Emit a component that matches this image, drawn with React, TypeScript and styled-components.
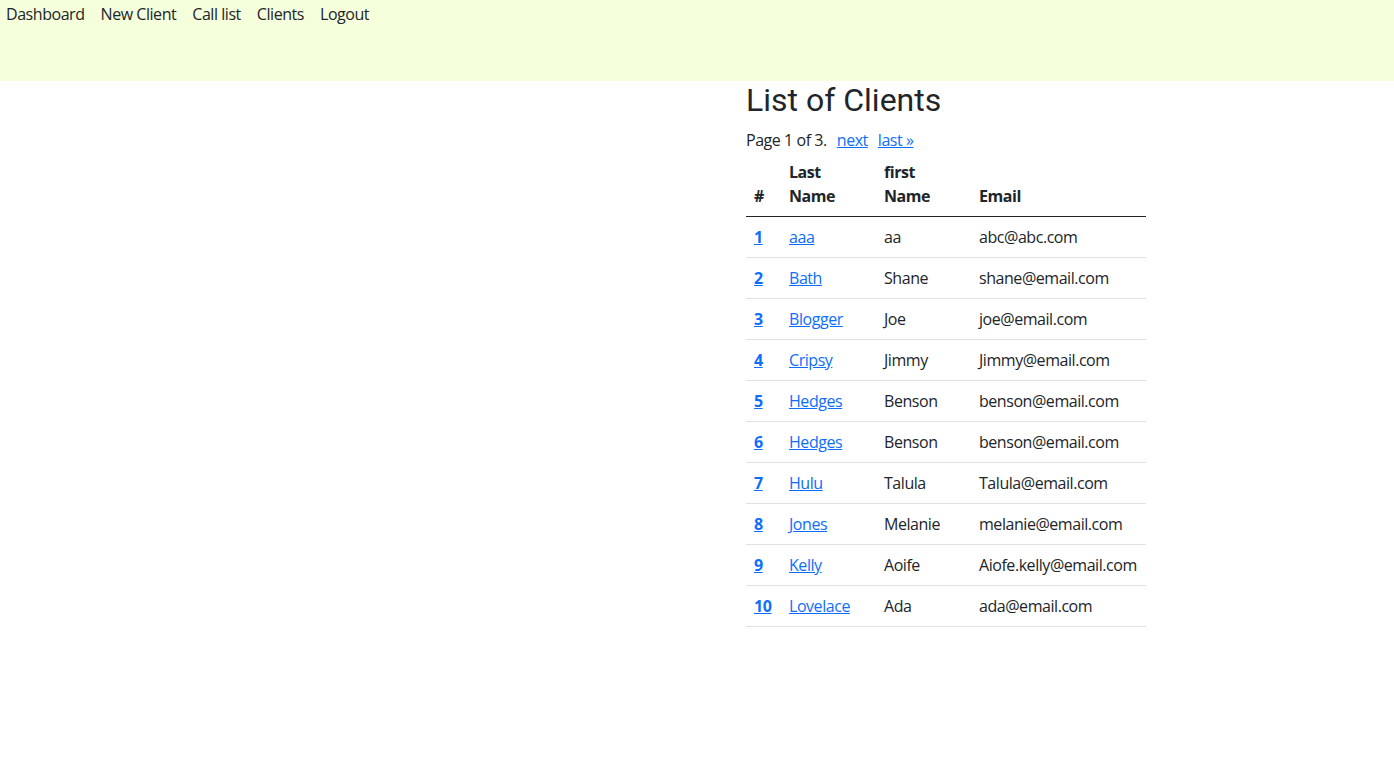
import React from "react";
import styled, { createGlobalStyle } from "styled-components";

const Global = createGlobalStyle`
  html, body { margin: 0; padding: 0; }
  body {
    font-family: "Open Sans", "Noto Sans", sans-serif;
    font-size: 16px;
    line-height: 1.5;
    letter-spacing: -0.45px;
    color: #212529;
    background: #fff;
  }
  * { box-sizing: border-box; }
`;

const NavBar = styled.nav`
  height: 81px;
  background: #f5ffdc;
  display: flex;
  align-items: flex-start;
  gap: 16px;
  padding: 2px 6px;
`;

const NavLink = styled.a`
  color: #212529;
  text-decoration: none;
  font-size: 16px;
  line-height: 24px;
  cursor: pointer;
`;

const Layout = styled.div`
  display: grid;
  grid-template-columns: 746px 400px 1fr;
`;

const Main = styled.main`
  grid-column: 2;
`;

const Title = styled.h2`
  font-family: Roboto, sans-serif;
  font-weight: 400;
  font-size: 32px;
  letter-spacing: 0;
  line-height: 40px;
  margin: -1px 0 8px;
`;

const Pager = styled.p`
  margin: 0;
  line-height: 24px;
  display: flex;
  gap: 10px;
`;

const Link = styled.a<{ $bold?: boolean }>`
  color: #0d6efd;
  text-decoration: underline;
  font-weight: ${(p) => (p.$bold ? 700 : 400)};
  cursor: pointer;
`;

const Table = styled.table`
  width: 400px;
  border-collapse: collapse;
  table-layout: fixed;
`;

const Th = styled.th<{ $w: number }>`
  width: ${(p) => p.$w}px;
  text-align: left;
  vertical-align: bottom;
  font-weight: 700;
  padding: 8px;
  line-height: 24px;
  border-bottom: 1px solid #212529;
`;

const Td = styled.td`
  padding: 8px;
  line-height: 24px;
  border-bottom: 1px solid #dee2e6;
  white-space: nowrap;
`;

const clients = [
  ["aaa", "aa", "abc@abc.com"],
  ["Bath", "Shane", "shane@email.com"],
  ["Blogger", "Joe", "joe@email.com"],
  ["Cripsy", "Jimmy", "Jimmy@email.com"],
  ["Hedges", "Benson", "benson@email.com"],
  ["Hedges", "Benson", "benson@email.com"],
  ["Hulu", "Talula", "Talula@email.com"],
  ["Jones", "Melanie", "melanie@email.com"],
  ["Kelly", "Aoife", "Aiofe.kelly@email.com"],
  ["Lovelace", "Ada", "ada@email.com"],
];

export default function App() {
  return (
    <>
      <Global />
      <NavBar>
        {["Dashboard", "New Client", "Call list", "Clients", "Logout"].map((n) => (
          <NavLink key={n}>{n}</NavLink>
        ))}
      </NavBar>
      <Layout>
        <Main>
          <Title>List of Clients</Title>
          <Pager>
            <span>Page 1 of 3.</span>
            <Link>next</Link>
            <Link>last »</Link>
          </Pager>
          <Table>
            <thead>
              <tr>
                <Th $w={35}>#</Th>
                <Th $w={95}>Last Name</Th>
                <Th $w={95}>first Name</Th>
                <Th $w={175}>Email</Th>
              </tr>
            </thead>
            <tbody>
              {clients.map((c, i) => (
                <tr key={i}>
                  <Td>
                    <Link $bold>{i + 1}</Link>
                  </Td>
                  <Td>
                    <Link>{c[0]}</Link>
                  </Td>
                  <Td>{c[1]}</Td>
                  <Td>{c[2]}</Td>
                </tr>
              ))}
            </tbody>
          </Table>
        </Main>
      </Layout>
    </>
  );
}
